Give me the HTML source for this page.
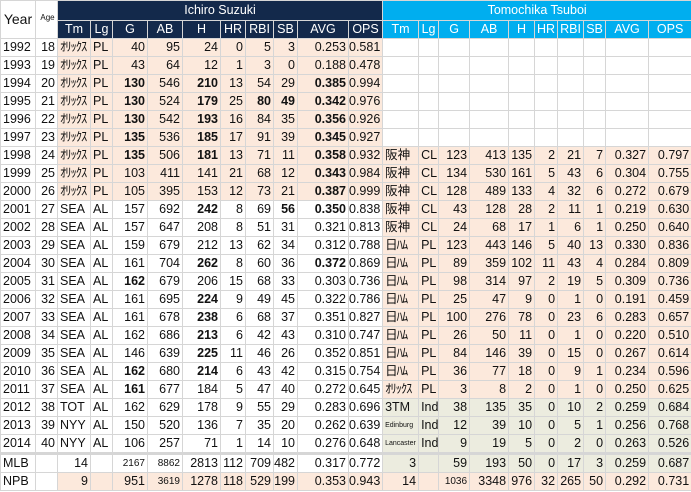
<!DOCTYPE html>
<html><head><meta charset="utf-8"><style>
body{margin:0;background:#fff;width:691px;height:492px;overflow:hidden;font-family:"Liberation Sans","Noto Sans CJK JP",sans-serif;}
table{border-collapse:collapse;table-layout:fixed;width:691px;font-size:12.5px;color:#111;}
td,th{border:1px solid #d6d6d6;padding:0 2px 0 0;height:17px;line-height:17px;white-space:nowrap;overflow:hidden;text-align:right;}
th{font-weight:normal;}
.hl{background:#13294b;color:#fff;}
.hr{background:#00aeef;color:#fff;}
.h1 th{height:19px;text-align:center;padding:0;}
.h2 th{text-align:center;padding:0;}
.yr{background:#fff;color:#111;text-align:left;padding-left:4px;font-size:14px;vertical-align:middle}
.l{text-align:left;padding-left:2px}
.p{background:#fce9dc}
.g{background:#ececdf}
.s{font-size:10px}
.xs{font-size:7px}
.k{letter-spacing:-1px;}
b{font-weight:bold}
tr.t td{border-top:3px solid #d6d6d6}
</style></head><body>
<table>
<colgroup>
<col style="width:35px"><col style="width:22px"><col style="width:33px"><col style="width:22px"><col style="width:35px"><col style="width:35px"><col style="width:38px"><col style="width:25px"><col style="width:28px"><col style="width:24px"><col style="width:51px"><col style="width:34px">
<col style="width:36px"><col style="width:20px"><col style="width:31px"><col style="width:39px"><col style="width:26px"><col style="width:23px"><col style="width:26px"><col style="width:22px"><col style="width:43px"><col style="width:43px">
</colgroup>
<tr class="h1"><th rowspan="2" class="yr">Year</th><th rowspan="2" class="yr" style="font-size:8px;padding-left:2px;vertical-align:top;padding-top:8px">Age</th><th colspan="10" class="hl">Ichiro Suzuki</th><th colspan="10" class="hr">Tomochika Tsuboi</th></tr>
<tr class="h2"><th class="hl">Tm</th><th class="hl">Lg</th><th class="hl">G</th><th class="hl">AB</th><th class="hl">H</th><th class="hl">HR</th><th class="hl">RBI</th><th class="hl">SB</th><th class="hl">AVG</th><th class="hl">OPS</th><th class="hr">Tm</th><th class="hr">Lg</th><th class="hr">G</th><th class="hr">AB</th><th class="hr">H</th><th class="hr">HR</th><th class="hr">RBI</th><th class="hr">SB</th><th class="hr">AVG</th><th class="hr">OPS</th></tr>
<tr><td class="l">1992</td><td>18</td><td class="l p k">ｵﾘｯｸｽ</td><td class="l p">PL</td><td class="p">40</td><td class="p">95</td><td class="p">24</td><td class="p">0</td><td class="p">5</td><td class="p">3</td><td class="p">0.253</td><td class="p">0.581</td><td></td><td></td><td></td><td></td><td></td><td></td><td></td><td></td><td></td><td></td></tr>
<tr><td class="l">1993</td><td>19</td><td class="l p k">ｵﾘｯｸｽ</td><td class="l p">PL</td><td class="p">43</td><td class="p">64</td><td class="p">12</td><td class="p">1</td><td class="p">3</td><td class="p">0</td><td class="p">0.188</td><td class="p">0.478</td><td></td><td></td><td></td><td></td><td></td><td></td><td></td><td></td><td></td><td></td></tr>
<tr><td class="l">1994</td><td>20</td><td class="l p k">ｵﾘｯｸｽ</td><td class="l p">PL</td><td class="p"><b>130</b></td><td class="p">546</td><td class="p"><b>210</b></td><td class="p">13</td><td class="p">54</td><td class="p">29</td><td class="p"><b>0.385</b></td><td class="p">0.994</td><td></td><td></td><td></td><td></td><td></td><td></td><td></td><td></td><td></td><td></td></tr>
<tr><td class="l">1995</td><td>21</td><td class="l p k">ｵﾘｯｸｽ</td><td class="l p">PL</td><td class="p"><b>130</b></td><td class="p">524</td><td class="p"><b>179</b></td><td class="p">25</td><td class="p"><b>80</b></td><td class="p"><b>49</b></td><td class="p"><b>0.342</b></td><td class="p">0.976</td><td></td><td></td><td></td><td></td><td></td><td></td><td></td><td></td><td></td><td></td></tr>
<tr><td class="l">1996</td><td>22</td><td class="l p k">ｵﾘｯｸｽ</td><td class="l p">PL</td><td class="p"><b>130</b></td><td class="p">542</td><td class="p"><b>193</b></td><td class="p">16</td><td class="p">84</td><td class="p">35</td><td class="p"><b>0.356</b></td><td class="p">0.926</td><td></td><td></td><td></td><td></td><td></td><td></td><td></td><td></td><td></td><td></td></tr>
<tr><td class="l">1997</td><td>23</td><td class="l p k">ｵﾘｯｸｽ</td><td class="l p">PL</td><td class="p"><b>135</b></td><td class="p">536</td><td class="p"><b>185</b></td><td class="p">17</td><td class="p">91</td><td class="p">39</td><td class="p"><b>0.345</b></td><td class="p">0.927</td><td></td><td></td><td></td><td></td><td></td><td></td><td></td><td></td><td></td><td></td></tr>
<tr><td class="l">1998</td><td>24</td><td class="l p k">ｵﾘｯｸｽ</td><td class="l p">PL</td><td class="p"><b>135</b></td><td class="p">506</td><td class="p"><b>181</b></td><td class="p">13</td><td class="p">71</td><td class="p">11</td><td class="p"><b>0.358</b></td><td class="p">0.932</td><td class="l p">阪神</td><td class="l p">CL</td><td class="p">123</td><td class="p">413</td><td class="p">135</td><td class="p">2</td><td class="p">21</td><td class="p">7</td><td class="p">0.327</td><td class="p">0.797</td></tr>
<tr><td class="l">1999</td><td>25</td><td class="l p k">ｵﾘｯｸｽ</td><td class="l p">PL</td><td class="p">103</td><td class="p">411</td><td class="p">141</td><td class="p">21</td><td class="p">68</td><td class="p">12</td><td class="p"><b>0.343</b></td><td class="p">0.984</td><td class="l p">阪神</td><td class="l p">CL</td><td class="p">134</td><td class="p">530</td><td class="p">161</td><td class="p">5</td><td class="p">43</td><td class="p">6</td><td class="p">0.304</td><td class="p">0.755</td></tr>
<tr><td class="l">2000</td><td>26</td><td class="l p k">ｵﾘｯｸｽ</td><td class="l p">PL</td><td class="p">105</td><td class="p">395</td><td class="p">153</td><td class="p">12</td><td class="p">73</td><td class="p">21</td><td class="p"><b>0.387</b></td><td class="p">0.999</td><td class="l p">阪神</td><td class="l p">CL</td><td class="p">128</td><td class="p">489</td><td class="p">133</td><td class="p">4</td><td class="p">32</td><td class="p">6</td><td class="p">0.272</td><td class="p">0.679</td></tr>
<tr><td class="l">2001</td><td>27</td><td class="l">SEA</td><td class="l">AL</td><td>157</td><td>692</td><td><b>242</b></td><td>8</td><td>69</td><td><b>56</b></td><td><b>0.350</b></td><td>0.838</td><td class="l p">阪神</td><td class="l p">CL</td><td class="p">43</td><td class="p">128</td><td class="p">28</td><td class="p">2</td><td class="p">11</td><td class="p">1</td><td class="p">0.219</td><td class="p">0.630</td></tr>
<tr><td class="l">2002</td><td>28</td><td class="l">SEA</td><td class="l">AL</td><td>157</td><td>647</td><td>208</td><td>8</td><td>51</td><td>31</td><td>0.321</td><td>0.813</td><td class="l p">阪神</td><td class="l p">CL</td><td class="p">24</td><td class="p">68</td><td class="p">17</td><td class="p">1</td><td class="p">6</td><td class="p">1</td><td class="p">0.250</td><td class="p">0.640</td></tr>
<tr><td class="l">2003</td><td>29</td><td class="l">SEA</td><td class="l">AL</td><td>159</td><td>679</td><td>212</td><td>13</td><td>62</td><td>34</td><td>0.312</td><td>0.788</td><td class="l p k">日ﾊﾑ</td><td class="l p">PL</td><td class="p">123</td><td class="p">443</td><td class="p">146</td><td class="p">5</td><td class="p">40</td><td class="p">13</td><td class="p">0.330</td><td class="p">0.836</td></tr>
<tr><td class="l">2004</td><td>30</td><td class="l">SEA</td><td class="l">AL</td><td>161</td><td>704</td><td><b>262</b></td><td>8</td><td>60</td><td>36</td><td><b>0.372</b></td><td>0.869</td><td class="l p k">日ﾊﾑ</td><td class="l p">PL</td><td class="p">89</td><td class="p">359</td><td class="p">102</td><td class="p">11</td><td class="p">43</td><td class="p">4</td><td class="p">0.284</td><td class="p">0.809</td></tr>
<tr><td class="l">2005</td><td>31</td><td class="l">SEA</td><td class="l">AL</td><td><b>162</b></td><td>679</td><td>206</td><td>15</td><td>68</td><td>33</td><td>0.303</td><td>0.736</td><td class="l p k">日ﾊﾑ</td><td class="l p">PL</td><td class="p">98</td><td class="p">314</td><td class="p">97</td><td class="p">2</td><td class="p">19</td><td class="p">5</td><td class="p">0.309</td><td class="p">0.736</td></tr>
<tr><td class="l">2006</td><td>32</td><td class="l">SEA</td><td class="l">AL</td><td>161</td><td>695</td><td><b>224</b></td><td>9</td><td>49</td><td>45</td><td>0.322</td><td>0.786</td><td class="l p k">日ﾊﾑ</td><td class="l p">PL</td><td class="p">25</td><td class="p">47</td><td class="p">9</td><td class="p">0</td><td class="p">1</td><td class="p">0</td><td class="p">0.191</td><td class="p">0.459</td></tr>
<tr><td class="l">2007</td><td>33</td><td class="l">SEA</td><td class="l">AL</td><td>161</td><td>678</td><td><b>238</b></td><td>6</td><td>68</td><td>37</td><td>0.351</td><td>0.827</td><td class="l p k">日ﾊﾑ</td><td class="l p">PL</td><td class="p">100</td><td class="p">276</td><td class="p">78</td><td class="p">0</td><td class="p">23</td><td class="p">6</td><td class="p">0.283</td><td class="p">0.657</td></tr>
<tr><td class="l">2008</td><td>34</td><td class="l">SEA</td><td class="l">AL</td><td>162</td><td>686</td><td><b>213</b></td><td>6</td><td>42</td><td>43</td><td>0.310</td><td>0.747</td><td class="l p k">日ﾊﾑ</td><td class="l p">PL</td><td class="p">26</td><td class="p">50</td><td class="p">11</td><td class="p">0</td><td class="p">1</td><td class="p">0</td><td class="p">0.220</td><td class="p">0.510</td></tr>
<tr><td class="l">2009</td><td>35</td><td class="l">SEA</td><td class="l">AL</td><td>146</td><td>639</td><td><b>225</b></td><td>11</td><td>46</td><td>26</td><td>0.352</td><td>0.851</td><td class="l p k">日ﾊﾑ</td><td class="l p">PL</td><td class="p">84</td><td class="p">146</td><td class="p">39</td><td class="p">0</td><td class="p">15</td><td class="p">0</td><td class="p">0.267</td><td class="p">0.614</td></tr>
<tr><td class="l">2010</td><td>36</td><td class="l">SEA</td><td class="l">AL</td><td><b>162</b></td><td>680</td><td><b>214</b></td><td>6</td><td>43</td><td>42</td><td>0.315</td><td>0.754</td><td class="l p k">日ﾊﾑ</td><td class="l p">PL</td><td class="p">36</td><td class="p">77</td><td class="p">18</td><td class="p">0</td><td class="p">9</td><td class="p">1</td><td class="p">0.234</td><td class="p">0.596</td></tr>
<tr><td class="l">2011</td><td>37</td><td class="l">SEA</td><td class="l">AL</td><td><b>161</b></td><td>677</td><td>184</td><td>5</td><td>47</td><td>40</td><td>0.272</td><td>0.645</td><td class="l p k">ｵﾘｯｸｽ</td><td class="l p">PL</td><td class="p">3</td><td class="p">8</td><td class="p">2</td><td class="p">0</td><td class="p">1</td><td class="p">0</td><td class="p">0.250</td><td class="p">0.625</td></tr>
<tr><td class="l">2012</td><td>38</td><td class="l">TOT</td><td class="l">AL</td><td>162</td><td>629</td><td>178</td><td>9</td><td>55</td><td>29</td><td>0.283</td><td>0.696</td><td class="l g">3TM</td><td class="l g">Ind</td><td class="g">38</td><td class="g">135</td><td class="g">35</td><td class="g">0</td><td class="g">10</td><td class="g">2</td><td class="g">0.259</td><td class="g">0.684</td></tr>
<tr><td class="l">2013</td><td>39</td><td class="l">NYY</td><td class="l">AL</td><td>150</td><td>520</td><td>136</td><td>7</td><td>35</td><td>20</td><td>0.262</td><td>0.639</td><td class="l g xs">Edinburg</td><td class="l g">Ind</td><td class="g">12</td><td class="g">39</td><td class="g">10</td><td class="g">0</td><td class="g">5</td><td class="g">1</td><td class="g">0.256</td><td class="g">0.768</td></tr>
<tr><td class="l">2014</td><td>40</td><td class="l">NYY</td><td class="l">AL</td><td>106</td><td>257</td><td>71</td><td>1</td><td>14</td><td>10</td><td>0.276</td><td>0.648</td><td class="l g xs">Lancaster</td><td class="l g">Ind</td><td class="g">9</td><td class="g">19</td><td class="g">5</td><td class="g">0</td><td class="g">2</td><td class="g">0</td><td class="g">0.263</td><td class="g">0.526</td></tr>
<tr class="t"><td class="l">MLB</td><td></td><td>14</td><td></td><td class="s">2167</td><td class="s">8862</td><td>2813</td><td>112</td><td>709</td><td>482</td><td>0.317</td><td>0.772</td><td class="g">3</td><td class="g"></td><td class="g">59</td><td class="g">193</td><td class="g">50</td><td class="g">0</td><td class="g">17</td><td class="g">3</td><td class="g">0.259</td><td class="g">0.687</td></tr>
<tr><td class="l">NPB</td><td></td><td class="p">9</td><td class="p"></td><td class="p">951</td><td class="p s">3619</td><td class="p">1278</td><td class="p">118</td><td class="p">529</td><td class="p">199</td><td class="p">0.353</td><td class="p">0.943</td><td class="p">14</td><td class="p"></td><td class="p s">1036</td><td class="p">3348</td><td class="p">976</td><td class="p">32</td><td class="p">265</td><td class="p">50</td><td class="p">0.292</td><td class="p">0.731</td></tr>
</table>
</body></html>
